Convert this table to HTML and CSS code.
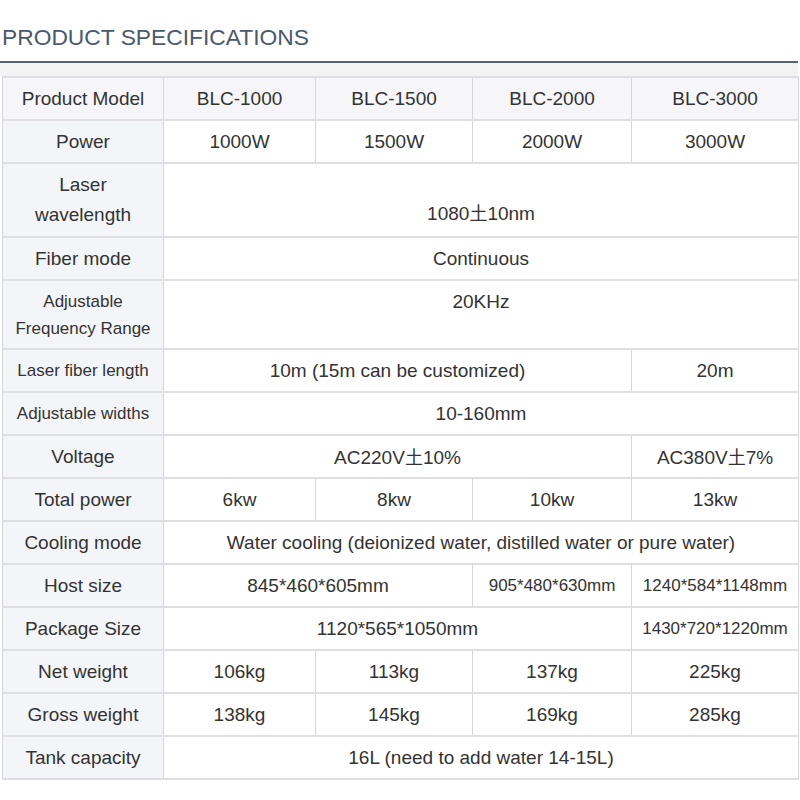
FILE: index.html
```html
<!DOCTYPE html>
<html>
<head>
<meta charset="utf-8">
<link rel="stylesheet" href="styles.css">
</head>
<body>
<div class="page">
  <h2 class="title">PRODUCT SPECIFICATIONS</h2>
  <div class="band"></div>
  <table class="spec">
    <colgroup>
      <col class="c1"><col class="c2"><col class="c3"><col class="c4"><col class="c5">
    </colgroup>
    <tr class="head">
      <td class="lab">Product Model</td><td>BLC-1000</td><td>BLC-1500</td><td>BLC-2000</td><td>BLC-3000</td>
    </tr>
    <tr>
      <td class="lab">Power</td><td>1000W</td><td>1500W</td><td>2000W</td><td>3000W</td>
    </tr>
    <tr class="tall">
      <td class="lab two">Laser<br>wavelength</td><td colspan="4" class="low">1080<span class="cjk">土</span>10nm</td>
    </tr>
    <tr>
      <td class="lab">Fiber mode</td><td colspan="4">Continuous</td>
    </tr>
    <tr class="freq">
      <td class="lab sm two">Adjustable<br>Frequency Range</td><td colspan="4" class="top">20KHz</td>
    </tr>
    <tr>
      <td class="lab sm">Laser fiber length</td><td colspan="3">10m (15m can be customized)</td><td>20m</td>
    </tr>
    <tr>
      <td class="lab sm">Adjustable widths</td><td colspan="4">10-160mm</td>
    </tr>
    <tr>
      <td class="lab">Voltage</td><td colspan="3">AC220V<span class="cjk">土</span>10%</td><td>AC380V<span class="cjk">土</span>7%</td>
    </tr>
    <tr>
      <td class="lab">Total power</td><td>6kw</td><td>8kw</td><td>10kw</td><td>13kw</td>
    </tr>
    <tr>
      <td class="lab">Cooling mode</td><td colspan="4">Water cooling (deionized water, distilled water or pure water)</td>
    </tr>
    <tr>
      <td class="lab">Host size</td><td colspan="2">845*460*605mm</td><td class="sm">905*480*630mm</td><td class="sm">1240*584*1148mm</td>
    </tr>
    <tr>
      <td class="lab">Package Size</td><td colspan="3">1120*565*1050mm</td><td class="sm">1430*720*1220mm</td>
    </tr>
    <tr>
      <td class="lab">Net weight</td><td>106kg</td><td>113kg</td><td>137kg</td><td>225kg</td>
    </tr>
    <tr>
      <td class="lab">Gross weight</td><td>138kg</td><td>145kg</td><td>169kg</td><td>285kg</td>
    </tr>
    <tr>
      <td class="lab">Tank capacity</td><td colspan="4">16L (need to add water 14-15L)</td>
    </tr>
  </table>
</div>
</body>
</html>
```

FILE: styles.css
```css
html, body {
  margin: 0;
  padding: 0;
  background: #ffffff;
}

.page {
  width: 800px;
  font-family: "Liberation Sans", Arial, "Noto Sans CJK SC", sans-serif;
  color: #333333;
}

.title {
  margin: 0 2px 0 0;
  padding: 24px 0 11px 2px;
  font-size: 22.8px;
  font-weight: normal;
  line-height: 26px;
  color: #4b596d;
  border-bottom: 2px solid #56627a;
}

.band {
  height: 13px;
  background: #f3f3f4;
  margin-right: 2px;
}

.spec {
  margin-left: 2px;
  width: 797px;
  table-layout: fixed;
  border-collapse: collapse;
  font-size: 19px;
  background: #ffffff;
}

.c1 { width: 161px; }
.c2 { width: 152px; }
.c3 { width: 157px; }
.c4 { width: 159px; }
.c5 { width: 167px; }

.spec td {
  height: 41px;
  padding: 0;
  text-align: center;
  vertical-align: middle;
  line-height: 30px;
  border-left: 1px solid #d6d6da;
  border-right: 1px solid #d6d6da;
  border-top: 2px solid #dfdfe3;
  border-bottom: 2px solid #dfdfe3;
  white-space: nowrap;
}

.spec td.lab {
  background: #f4f5f8;
}

.spec tr.head td {
  background: #f6f6f8;
}

.spec td.sm {
  font-size: 17px;
}

.spec td.sm.two {
  line-height: 27px;
}

.spec tr.tall td {
  height: 72px;
}

.spec tr.freq td {
  height: 67px;
}

.spec tr.tall td.low {
  height: 65px;
  vertical-align: bottom;
  padding-bottom: 7px;
}

.spec td.top {
  vertical-align: top;
  line-height: 42px;
}

.cjk {
  font-family: "Noto Sans CJK SC", sans-serif;
  font-size: 18px;
}
```
